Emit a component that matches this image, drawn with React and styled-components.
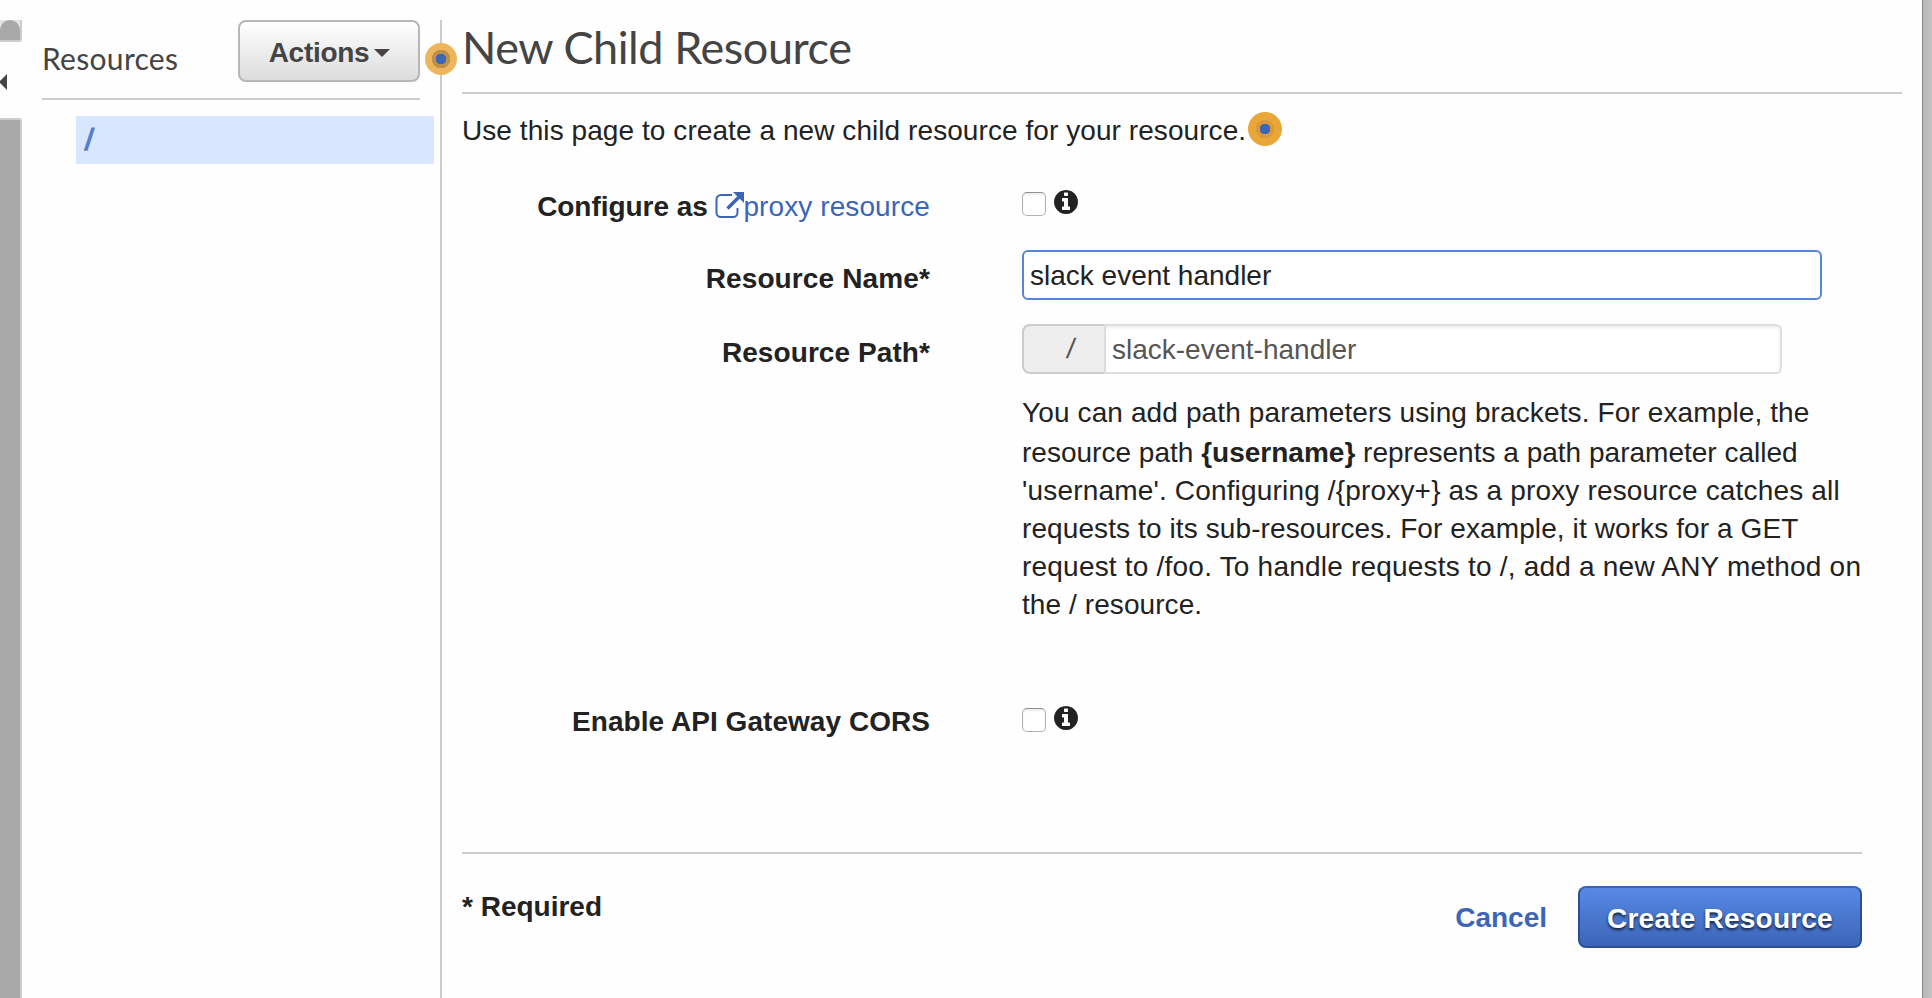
import React from "react";
import styled, { createGlobalStyle } from "styled-components";

const GlobalStyle = createGlobalStyle`
  * { box-sizing: border-box; }
  body {
    margin: 0;
    background: #fefefe;
    color: #222;
    font: 28px/38px "Liberation Sans", Arial, sans-serif;
    overflow: hidden;
  }
`;

const Page = styled.div`
  display: flex;
  width: 1932px;
  height: 998px;
  overflow: hidden;
`;

const Gutter = styled.div`
  width: 22px;
  padding-top: 20px;
  display: flex;
  flex-direction: column;
`;

const GutterTab = styled.div`
  height: 22px;
  background: #e4e4e4;
  border: solid #ccc;
  border-width: 0 2px 2px 0;
  border-radius: 0 0 3px 0;
  &::before {
    content: "";
    display: block;
    height: 20px;
    background: #a9a9a9;
    border-radius: 10px 10px 0 0;
  }
`;

const GutterArrow = styled.svg`
  display: block;
  width: 8px;
  height: 16px;
  margin: 32px 0 28px;
`;

const GutterBar = styled.div`
  flex: 1;
  background: #a9a9a9;
  border: solid #ccc;
  border-width: 2px 2px 0 0;
  border-radius: 0 3px 0 0;
`;

const Sidebar = styled.aside`
  width: 420px;
  margin-top: 20px;
  padding-left: 20px;
  border-right: 2px solid #ccc;
  position: relative;
`;

const SidebarHeader = styled.div`
  display: flex;
  justify-content: space-between;
  width: 378px;
  height: 80px;
  border-bottom: 2px solid #ccc;
`;

const SidebarTitle = styled.h2`
  margin: 19px 0 0;
  font: 400 30px/38px Lato, sans-serif;
  letter-spacing: 0.3px;
  color: #444;
`;

const ActionsButton = styled.button`
  display: flex;
  align-items: center;
  justify-content: center;
  gap: 5px;
  width: 182px;
  height: 62px;
  padding: 3px 0 0 1px;
  border: 2px solid #b7b7b7;
  border-radius: 8px;
  background: linear-gradient(#fff, #dcdcdc);
  color: #444;
  font: 700 28px/38px "Liberation Sans", Arial, sans-serif;
  letter-spacing: -0.3px;
`;

const Caret = styled.span`
  border: solid transparent;
  border-width: 8px 8px 0;
  border-top-color: #444;
`;

const Slash = styled.span`
  display: inline-block;
  transform: skewX(-8deg);
`;

const TreeItem = styled.div`
  width: 358px;
  height: 48px;
  margin: 16px 0 0 34px;
  padding: 5px 9px;
  background: #d8e6ff;
  color: #557fc9;
  font-weight: 700;
  font-size: 31px;
`;

const Beacon = styled.span`
  position: absolute;
  left: ${(p) => p.$x}px;
  top: ${(p) => p.$y}px;
  width: ${(p) => p.$size}px;
  height: ${(p) => p.$size}px;
  border-radius: 50%;
  background: radial-gradient(circle, #3c65b8 0 5px, ${(p) => p.$ring} 5.5px 9px, ${(p) => p.$fill} 9.5px);
`;

const Main = styled.main`
  flex: 1;
  padding: 0 20px;
`;

const Title = styled.h1`
  height: 94px;
  margin: 0;
  padding-top: 20px;
  border-bottom: 2px solid #ccc;
  color: #444;
  font: 400 45px/54px Lato, sans-serif;
  letter-spacing: -0.43px;
`;

const Intro = styled.p`
  position: relative;
  margin: 18px 0 0;
  letter-spacing: 0.07px;
`;

const Form = styled.form`
  width: 1400px;
  height: 704px;
  padding-top: 37px;
  border-bottom: 2px solid #ccc;
`;

const Row = styled.div`
  display: flex;
  gap: 92px;
  height: ${(p) => p.$height}px;
`;

const Label = styled.label`
  width: 468px;
  margin-top: ${(p) => p.$drop || 0}px;
  text-align: right;
  white-space: nowrap;
  font-weight: 700;
  letter-spacing: ${(p) => p.$track || 0}px;
`;

const Link = styled.a`
  color: #3c65b8;
  font-weight: 400;
  letter-spacing: 0.1px;
`;

const ExternalIcon = styled.svg`
  width: 29px;
  height: 28px;
  margin-right: -1px;
  vertical-align: -2.5px;
`;

const Toggle = styled.div`
  display: flex;
  gap: 8px;
`;

const InfoSvg = styled.svg`
  width: 24px;
  height: 24px;
  margin-top: 3px;
  fill: #222;
`;

const Checkbox = styled.input`
  appearance: none;
  width: 24px;
  height: 24px;
  margin: 5px 0 0;
  border: 1.5px solid #b0b0b0;
  border-top-color: #909090;
  border-radius: 5px;
  background: #fff;
  box-shadow: inset 0 2px 2px #eee;
`;

const NameInput = styled.input`
  width: 800px;
  height: 50px;
  margin-top: -10px;
  padding: 2px 6px 0;
  border: 2px solid #5586da;
  border-radius: 6px;
  outline: none;
  background: #fff;
  color: #222;
  font: inherit;
`;

const PathGroup = styled.div`
  display: flex;
  width: 760px;
  height: 50px;
  margin-top: -10px;
`;

const Prefix = styled.span`
  width: 82px;
  padding: 4px 0 0 43px;
  border: 2px solid #ccc;
  border-right: 0;
  border-radius: 8px 0 0 8px;
  background: #eee;
  color: #555;
`;

const PathInput = styled(NameInput)`
  flex: 1;
  width: 0;
  margin: 0;
  border-color: #ddd;
  border-radius: 0 6px 6px 0;
  color: #555;
  box-shadow: inset 0 2px 3px #eee;
`;

const Help = styled.p`
  margin: 0 0 0 560px;
  height: 309px;
`;

const HelpLine = styled.span`
  display: block;
  height: ${(p) => p.$height || 38}px;
  white-space: nowrap;
  letter-spacing: ${(p) => p.$track || 0}px;
`;

const Footer = styled.footer`
  display: flex;
  width: 1400px;
  padding-top: 32px;
  align-items: flex-start;
  font-weight: 700;
`;

const Required = styled.span`
  margin: 2px auto 0 0;
`;

const Cancel = styled.a`
  margin: 13px 31px 0 0;
  color: #3c65b8;
`;

const CreateButton = styled.button`
  width: 284px;
  height: 62px;
  padding: 3px 0 0;
  border: 2px solid #2c4f94;
  border-top-color: #3964b6;
  border-radius: 8px;
  background: linear-gradient(#5789e5, #3c65b8);
  color: #fff;
  font: 700 28px/38px "Liberation Sans", Arial, sans-serif;
  letter-spacing: 0.22px;
  text-shadow: 0 2px 3px rgba(0, 0, 0, 0.75);
`;

const WindowEdge = styled.div`
  width: 10px;
  border-left: 1px solid #888;
  background: linear-gradient(90deg, #b8b8b8, #c4c4c4);
`;

function InfoIcon() {
  return (
    <InfoSvg viewBox="128 128 1536 1536">
      <path d="M1152 1376v-160q0-14-9-23t-23-9h-96v-512q0-14-9-23t-23-9h-320q-14 0-23 9t-9 23v160q0 14 9 23t23 9h96v320h-96q-14 0-23 9t-9 23v160q0 14 9 23t23 9h448q14 0 23-9t9-23zm-128-896v-160q0-14-9-23t-23-9h-192q-14 0-23 9t-9 23v160q0 14 9 23t23 9h192q14 0 23-9t9-23zm640 416q0 209-103 385.500t-279.500 279.500-385.500 103-385.500-103-279.500-279.500-103-385.500 103-385.500 279.500-279.500 385.500-103 385.500 103 279.500 279.500 103 385.500z" />
    </InfoSvg>
  );
}

export default function App() {
  return (
    <>
      <GlobalStyle />
      <Page>
        <Gutter>
          <GutterTab />
          <GutterArrow viewBox="0 0 8 16">
            <path d="M7 0v16L-1 8z" fill="#444" />
          </GutterArrow>
          <GutterBar />
        </Gutter>
        <Sidebar>
          <SidebarHeader>
            <SidebarTitle>Resources</SidebarTitle>
            <ActionsButton type="button">
              Actions
              <Caret />
            </ActionsButton>
          </SidebarHeader>
          <TreeItem>
            <Slash>/</Slash>
          </TreeItem>
          <Beacon $x={403} $y={23} $size={32} $fill="#eeb65c" $ring="#bd904a" />
        </Sidebar>
        <Main>
          <Title>New Child Resource</Title>
          <Intro>
            Use this page to create a new child resource for your resource.
            <Beacon $x={786} $y={0} $size={34} $fill="#e9a73a" $ring="#db9a35" />
          </Intro>
          <Form>
            <Row $height={73}>
              <Label $drop={1} $track={-0.05}>
                Configure as{" "}
                <Link>
                  <ExternalIcon viewBox="0 0 29 28" fill="none">
                    <path d="M17 4H6A4.500 4.500 0 0 0 1.500 8.500v13A4.500 4.500 0 0 0 6 26h12a4.500 4.500 0 0 0 4.500-4.500V17" stroke="#3c65b8" strokeWidth="2" />
                    <path d="M12.500 17.500L24 6" stroke="#3c65b8" strokeWidth="3.400" />
                    <path d="M18 1H29v11z" fill="#3c65b8" />
                  </ExternalIcon>
                  proxy resource
                </Link>
              </Label>
              <Toggle>
                <Checkbox type="checkbox" />
                <InfoIcon />
              </Toggle>
            </Row>
            <Row $height={74}>
              <Label $track={0.13}>Resource Name*</Label>
              <NameInput defaultValue="slack event handler" />
            </Row>
            <Row $height={60}>
              <Label $track={0.08}>Resource Path*</Label>
              <PathGroup>
                <Prefix>
                  <Slash>/</Slash>
                </Prefix>
                <PathInput defaultValue="slack-event-handler" />
              </PathGroup>
            </Row>
            <Help>
              <HelpLine $height={40} $track={0.12}>You can add path parameters using brackets. For example, the</HelpLine>
              <HelpLine $track={0.01}>
                resource path <b>{"{username}"}</b> represents a path parameter called
              </HelpLine>
              <HelpLine $track={0.17}>{"'username'. Configuring /{proxy+} as a proxy resource catches all"}</HelpLine>
              <HelpLine $track={0.1}>requests to its sub-resources. For example, it works for a GET</HelpLine>
              <HelpLine $track={0.21}>request to /foo. To handle requests to /, add a new ANY method on</HelpLine>
              <HelpLine $track={0.08}>the / resource.</HelpLine>
            </Help>
            <Row $height={38}>
              <Label $track={0.05}>Enable API Gateway CORS</Label>
              <Toggle>
                <Checkbox type="checkbox" />
                <InfoIcon />
              </Toggle>
            </Row>
          </Form>
          <Footer>
            <Required>* Required</Required>
            <Cancel>Cancel</Cancel>
            <CreateButton type="button">Create Resource</CreateButton>
          </Footer>
        </Main>
        <WindowEdge />
      </Page>
    </>
  );
}
